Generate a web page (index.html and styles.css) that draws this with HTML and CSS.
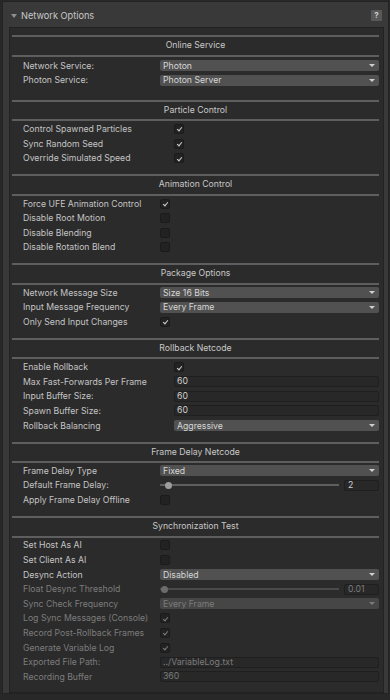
FILE: index.html
```html
<!DOCTYPE html>
<html lang="en">
<head>
  <meta charset="UTF-8" />
  <meta name="viewport" content="width=device-width, initial-scale=1.0"/>
  <title>Network Options</title>
  <link rel="stylesheet" href="styles.css">
</head>
<body>
  <div class="inspector">
    <div class="foldout-head">
      <span class="fold-arrow"></span>
      <span class="foldout-title">Network Options</span>
      <span class="help-btn">?</span>
    </div>

    <div class="panel">
      <!-- Online Service -->
      <section class="group group-online lw-short">
        <div class="group-title">Online Service</div>
        <div class="rows">
          <div class="row"><span class="label">Network Service:</span><div class="popup"><span>Photon</span><i class="caret"></i></div></div>
          <div class="row"><span class="label">Photon Service:</span><div class="popup"><span>Photon Server</span><i class="caret"></i></div></div>
        </div>
      </section>

      <!-- Particle Control -->
      <section class="group lw-long">
        <div class="group-title">Particle Control</div>
        <div class="rows">
          <div class="row"><span class="label">Control Spawned Particles</span><span class="check on"></span></div>
          <div class="row"><span class="label">Sync Random Seed</span><span class="check on"></span></div>
          <div class="row"><span class="label">Override Simulated Speed</span><span class="check on"></span></div>
        </div>
      </section>

      <!-- Animation Control -->
      <section class="group lw-short">
        <div class="group-title">Animation Control</div>
        <div class="rows">
          <div class="row"><span class="label">Force UFE Animation Control</span><span class="check on"></span></div>
          <div class="row"><span class="label">Disable Root Motion</span><span class="check"></span></div>
          <div class="row"><span class="label">Disable Blending</span><span class="check"></span></div>
          <div class="row"><span class="label">Disable Rotation Blend</span><span class="check"></span></div>
        </div>
      </section>

      <!-- Package Options -->
      <section class="group lw-short">
        <div class="group-title">Package Options</div>
        <div class="rows">
          <div class="row"><span class="label">Network Message Size</span><div class="popup"><span>Size 16 Bits</span><i class="caret"></i></div></div>
          <div class="row"><span class="label">Input Message Frequency</span><div class="popup"><span>Every Frame</span><i class="caret"></i></div></div>
          <div class="row"><span class="label">Only Send Input Changes</span><span class="check on"></span></div>
        </div>
      </section>

      <!-- Rollback Netcode -->
      <section class="group lw-long">
        <div class="group-title">Rollback Netcode</div>
        <div class="rows">
          <div class="row"><span class="label">Enable Rollback</span><span class="check on"></span></div>
          <div class="row"><span class="label">Max Fast-Forwards Per Frame</span><div class="field">60</div></div>
          <div class="row"><span class="label">Input Buffer Size:</span><div class="field">60</div></div>
          <div class="row"><span class="label">Spawn Buffer Size:</span><div class="field">60</div></div>
          <div class="row"><span class="label">Rollback Balancing</span><div class="popup"><span>Aggressive</span><i class="caret"></i></div></div>
        </div>
      </section>

      <!-- Frame Delay Netcode -->
      <section class="group lw-short">
        <div class="group-title">Frame Delay Netcode</div>
        <div class="rows">
          <div class="row"><span class="label">Frame Delay Type</span><div class="popup"><span>Fixed</span><i class="caret"></i></div></div>
          <div class="row">
            <span class="label">Default Frame Delay:</span>
            <div class="slider">
              <div class="track"><span class="thumb" style="left: 3%"></span></div>
              <div class="field num">2</div>
            </div>
          </div>
          <div class="row"><span class="label">Apply Frame Delay Offline</span><span class="check"></span></div>
        </div>
      </section>

      <!-- Synchronization Test -->
      <section class="group group-last lw-short">
        <div class="group-title">Synchronization Test</div>
        <div class="rows">
          <div class="row"><span class="label">Set Host As AI</span><span class="check"></span></div>
          <div class="row"><span class="label">Set Client As AI</span><span class="check"></span></div>
          <div class="row"><span class="label">Desync Action</span><div class="popup"><span>Disabled</span><i class="caret"></i></div></div>
          <div class="row disabled">
            <span class="label">Float Desync Threshold</span>
            <div class="slider">
              <div class="track"><span class="thumb" style="left: 0.5%"></span></div>
              <div class="field num">0.01</div>
            </div>
          </div>
          <div class="row disabled"><span class="label">Sync Check Frequency</span><div class="popup"><span>Every Frame</span><i class="caret"></i></div></div>
          <div class="row disabled"><span class="label">Log Sync Messages (Console)</span><span class="check on"></span></div>
          <div class="row disabled"><span class="label">Record Post-Rollback Frames</span><span class="check on"></span></div>
          <div class="row disabled"><span class="label">Generate Variable Log</span><span class="check on"></span></div>
          <div class="row disabled"><span class="label">Exported File Path:</span><div class="field">../VariableLog.txt</div></div>
          <div class="row disabled"><span class="label">Recording Buffer</span><div class="field">360</div></div>
        </div>
      </section>
    </div>
  </div>
</body>
</html>
```

FILE: styles.css
```css
body {
  margin: 0;
  background-color: #282828;
  font-family: Inter, "Noto Sans", sans-serif;
  font-size: 8.7px;
  color: #c4c4c4;
}

.inspector {
  margin: 1px 1px 2px 2px;
  padding: 0 4px 5px 6px;
  background-color: #393939;
  border: 1px solid #232323;
  height: 693px;
  box-sizing: border-box;
}

/* foldout header */
.foldout-head {
  height: 25px;
  display: flex;
  align-items: center;
  padding: 2px 0 0 2px;
  box-sizing: border-box;
}

.fold-arrow {
  width: 0;
  height: 0;
  border-left: 3px solid transparent;
  border-right: 3px solid transparent;
  border-top: 4px solid #8f8f8f;
  margin-right: 4px;
  margin-top: 1px;
}

.foldout-title {
  font-size: 9.2px;
  color: #c8c8c8;
  flex: 1;
}

.help-btn {
  width: 11px;
  height: 11px;
  background-color: #585858;
  color: #d0d0d0;
  font-size: 8px;
  font-weight: bold;
  text-align: center;
  line-height: 11px;
  border-radius: 1px;
  margin-right: 2px;
}

/* inner panel */
.panel {
  background-color: #2b2b2b;
  border: 1px solid #222;
  padding: 7px 4px 0 2px;
  height: 666px;
  box-sizing: border-box;
}

.group-title {
  border-top: 2px solid #5e5e5e;
  border-bottom: 2px solid #5e5e5e;
  height: 17.5px;
  line-height: 17.5px;
  text-align: center;
  color: #c8c8c8;
}

.rows {
  padding: 0.5px 0 8.75px 11px;
}

.group-online .rows {
  padding-top: 2px;
  padding-bottom: 12px;
}

.group-last .rows {
  padding-bottom: 0;
}

.lw-short { --lw: 137px; }
.lw-long { --lw: 151px; }

.row {
  height: 14.6px;
  display: grid;
  grid-template-columns: var(--lw) 1fr;
  align-items: center;
}

.label {
  white-space: nowrap;
}

/* popup field */
.popup {
  height: 11px;
  background-color: #515151;
  border-radius: 2px;
  display: flex;
  align-items: center;
  justify-content: space-between;
  padding: 0 4px 0 3px;
  color: #d6d6d6;
}

.caret {
  width: 0;
  height: 0;
  border-left: 3px solid transparent;
  border-right: 3px solid transparent;
  border-top: 3px solid #d0d0d0;
}

/* checkbox */
.check {
  width: 10px;
  height: 10px;
  box-sizing: border-box;
  background-color: #222;
  border: 1px solid #1b1b1b;
  border-radius: 2px;
  position: relative;
}

.check.on::after {
  content: "";
  position: absolute;
  left: 2.5px;
  top: 1.5px;
  width: 2px;
  height: 4px;
  border-right: 1.3px solid #d0d0d0;
  border-bottom: 1.3px solid #d0d0d0;
  transform: rotate(40deg);
}

/* text field */
.field {
  height: 11px;
  box-sizing: border-box;
  background-color: #282828;
  border: 1px solid #1f1f1f;
  border-radius: 2px;
  padding-left: 2px;
  line-height: 9px;
  color: #d0d0d0;
}

/* slider */
.slider {
  display: flex;
  align-items: center;
}

.track {
  flex: 1;
  height: 2px;
  background-color: #5e5e5e;
  position: relative;
}

.thumb {
  position: absolute;
  top: -2.5px;
  width: 7px;
  height: 7px;
  border-radius: 50%;
  background-color: #9d9d9d;
}

.field.num {
  width: 35px;
  margin-left: 5px;
  padding-left: 3px;
}

/* disabled rows */
.disabled .label,
.disabled .field,
.disabled .popup {
  color: #7c7c7c;
}

.disabled .popup {
  background-color: #464646;
}

.disabled .caret {
  border-top-color: #7c7c7c;
}

.disabled .check.on::after {
  border-color: #7c7c7c;
}

.disabled .thumb {
  background-color: #6c6c6c;
}

.disabled .track {
  background-color: #4a4a4a;
}
```
